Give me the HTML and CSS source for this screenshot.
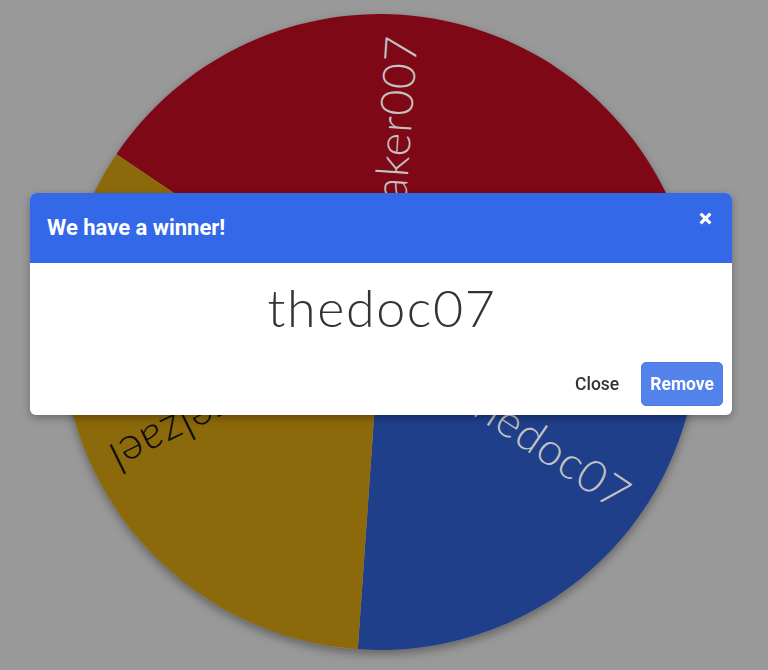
FILE: index.html
```html
<!DOCTYPE html>
<html lang="en">
<head>
<meta charset="utf-8">
<title>Wheel – We have a winner!</title>
<link rel="stylesheet" href="styles.css">
</head>
<body>
<main class="stage">
  <div class="wheel">
    <svg class="wheel-svg" viewBox="-318 -318 636 636" width="636" height="636">
      <path class="seg seg-red" d="M0 0 L-263.6 -177.8 A318 318 0 0 1 285.8 -139.4 Z"/>
      <path class="seg seg-blue" d="M0 0 L285.8 -139.4 A318 318 0 0 1 -22.2 317.2 Z"/>
      <path class="seg seg-gold" d="M0 0 L-22.2 317.2 A318 318 0 0 1 -263.6 -177.8 Z"/>
      <text class="label label-light" transform="rotate(274)" x="297" y="0">lawmaker007</text>
      <text class="label label-light" transform="rotate(34)" x="297" y="0">thedoc07</text>
      <text class="label label-dark" transform="rotate(154)" x="297" y="0">Azelzael</text>
    </svg>
  </div>
</main>

<div class="overlay">
  <section class="modal" role="dialog" aria-labelledby="modal-title">
    <header class="modal-header">
      <h5 class="modal-title" id="modal-title">We have a winner!</h5>
      <button class="modal-x" type="button" aria-label="Close">
        <svg viewBox="0 0 12 12" width="12" height="12"><path d="M1.5 1.5 L10.5 10.5 M10.5 1.5 L1.5 10.5"/></svg>
      </button>
    </header>
    <div class="modal-body">
      <p class="winner">thedoc07</p>
    </div>
    <footer class="modal-footer">
      <button class="btn btn-plain" type="button">Close</button>
      <button class="btn btn-primary" type="button">Remove</button>
    </footer>
  </section>
</div>
</body>
</html>
```

FILE: styles.css
```css
html, body {
  margin: 0;
  padding: 0;
}

body {
  background: #999999;
  width: 768px;
  height: 670px;
  overflow: hidden;
  font-family: "Roboto", "Liberation Sans", sans-serif;
}

.stage {
  padding: 14px 0 0 62px;
}

.wheel {
  width: 636px;
  height: 636px;
  border-radius: 50%;
  box-shadow: 0 4px 10px rgba(0, 0, 0, 0.35);
}

.wheel-svg {
  display: block;
}

.seg-red { fill: #7f0817; }
.seg-blue { fill: #1f3f8a; }
.seg-gold { fill: #8c690a; }

.label {
  font-family: "Lato", "Open Sans", sans-serif;
  font-weight: 300;
  font-size: 45px;
  letter-spacing: 0.6px;
  text-anchor: end;
  dominant-baseline: central;
}

.label-light { fill: #c2c2c2; }
.label-dark { fill: #0d0d0d; }

/* modal */
.overlay {
  position: fixed;
  inset: 0;
  padding: 193px 0 0 30px;
}

.modal {
  width: 702px;
  background: #ffffff;
  border-radius: 6px;
  overflow: hidden;
  box-shadow: 0 3px 8px rgba(0, 0, 0, 0.3);
}

.modal-header {
  height: 70px;
  box-sizing: border-box;
  padding: 0 20px 0 17px;
  display: flex;
  align-items: center;
  background: #3369e8;
  color: #ffffff;
}

.modal-title {
  margin: 0;
  font-size: 22px;
  font-weight: 700;
  line-height: 1;
}

.modal-x {
  margin-left: auto;
  align-self: flex-start;
  margin-top: 19px;
  padding: 0;
  border: 0;
  background: none;
  width: 13px;
  height: 13px;
  display: flex;
}

.modal-x svg {
  width: 13px;
  height: 13px;
}

.modal-x svg path {
  stroke: #ffffff;
  stroke-width: 3;
  fill: none;
}

.modal-body {
  padding: 14px 0 0;
}

.winner {
  margin: 0;
  padding-left: 2px;
  text-align: center;
  font-family: "Lato", "Open Sans", sans-serif;
  font-weight: 300;
  font-size: 52px;
  letter-spacing: 1.6px;
  line-height: 60px;
  color: #333333;
}

.modal-footer {
  display: flex;
  justify-content: flex-end;
  gap: 13px;
  padding: 25px 9px 9px;
}

.btn {
  font-family: "Roboto", "Liberation Sans", sans-serif;
  font-size: 17.5px;
  line-height: 24px;
  padding: 9px 8px;
  border: 1px solid transparent;
  border-radius: 5px;
  height: 44px;
  box-sizing: border-box;
}

.btn-plain {
  background: transparent;
  color: #333333;
  font-weight: 500;
}

.btn-primary {
  background: #5382ea;
  border-color: #4a7ae6;
  color: #ffffff;
  font-weight: 700;
}
```
